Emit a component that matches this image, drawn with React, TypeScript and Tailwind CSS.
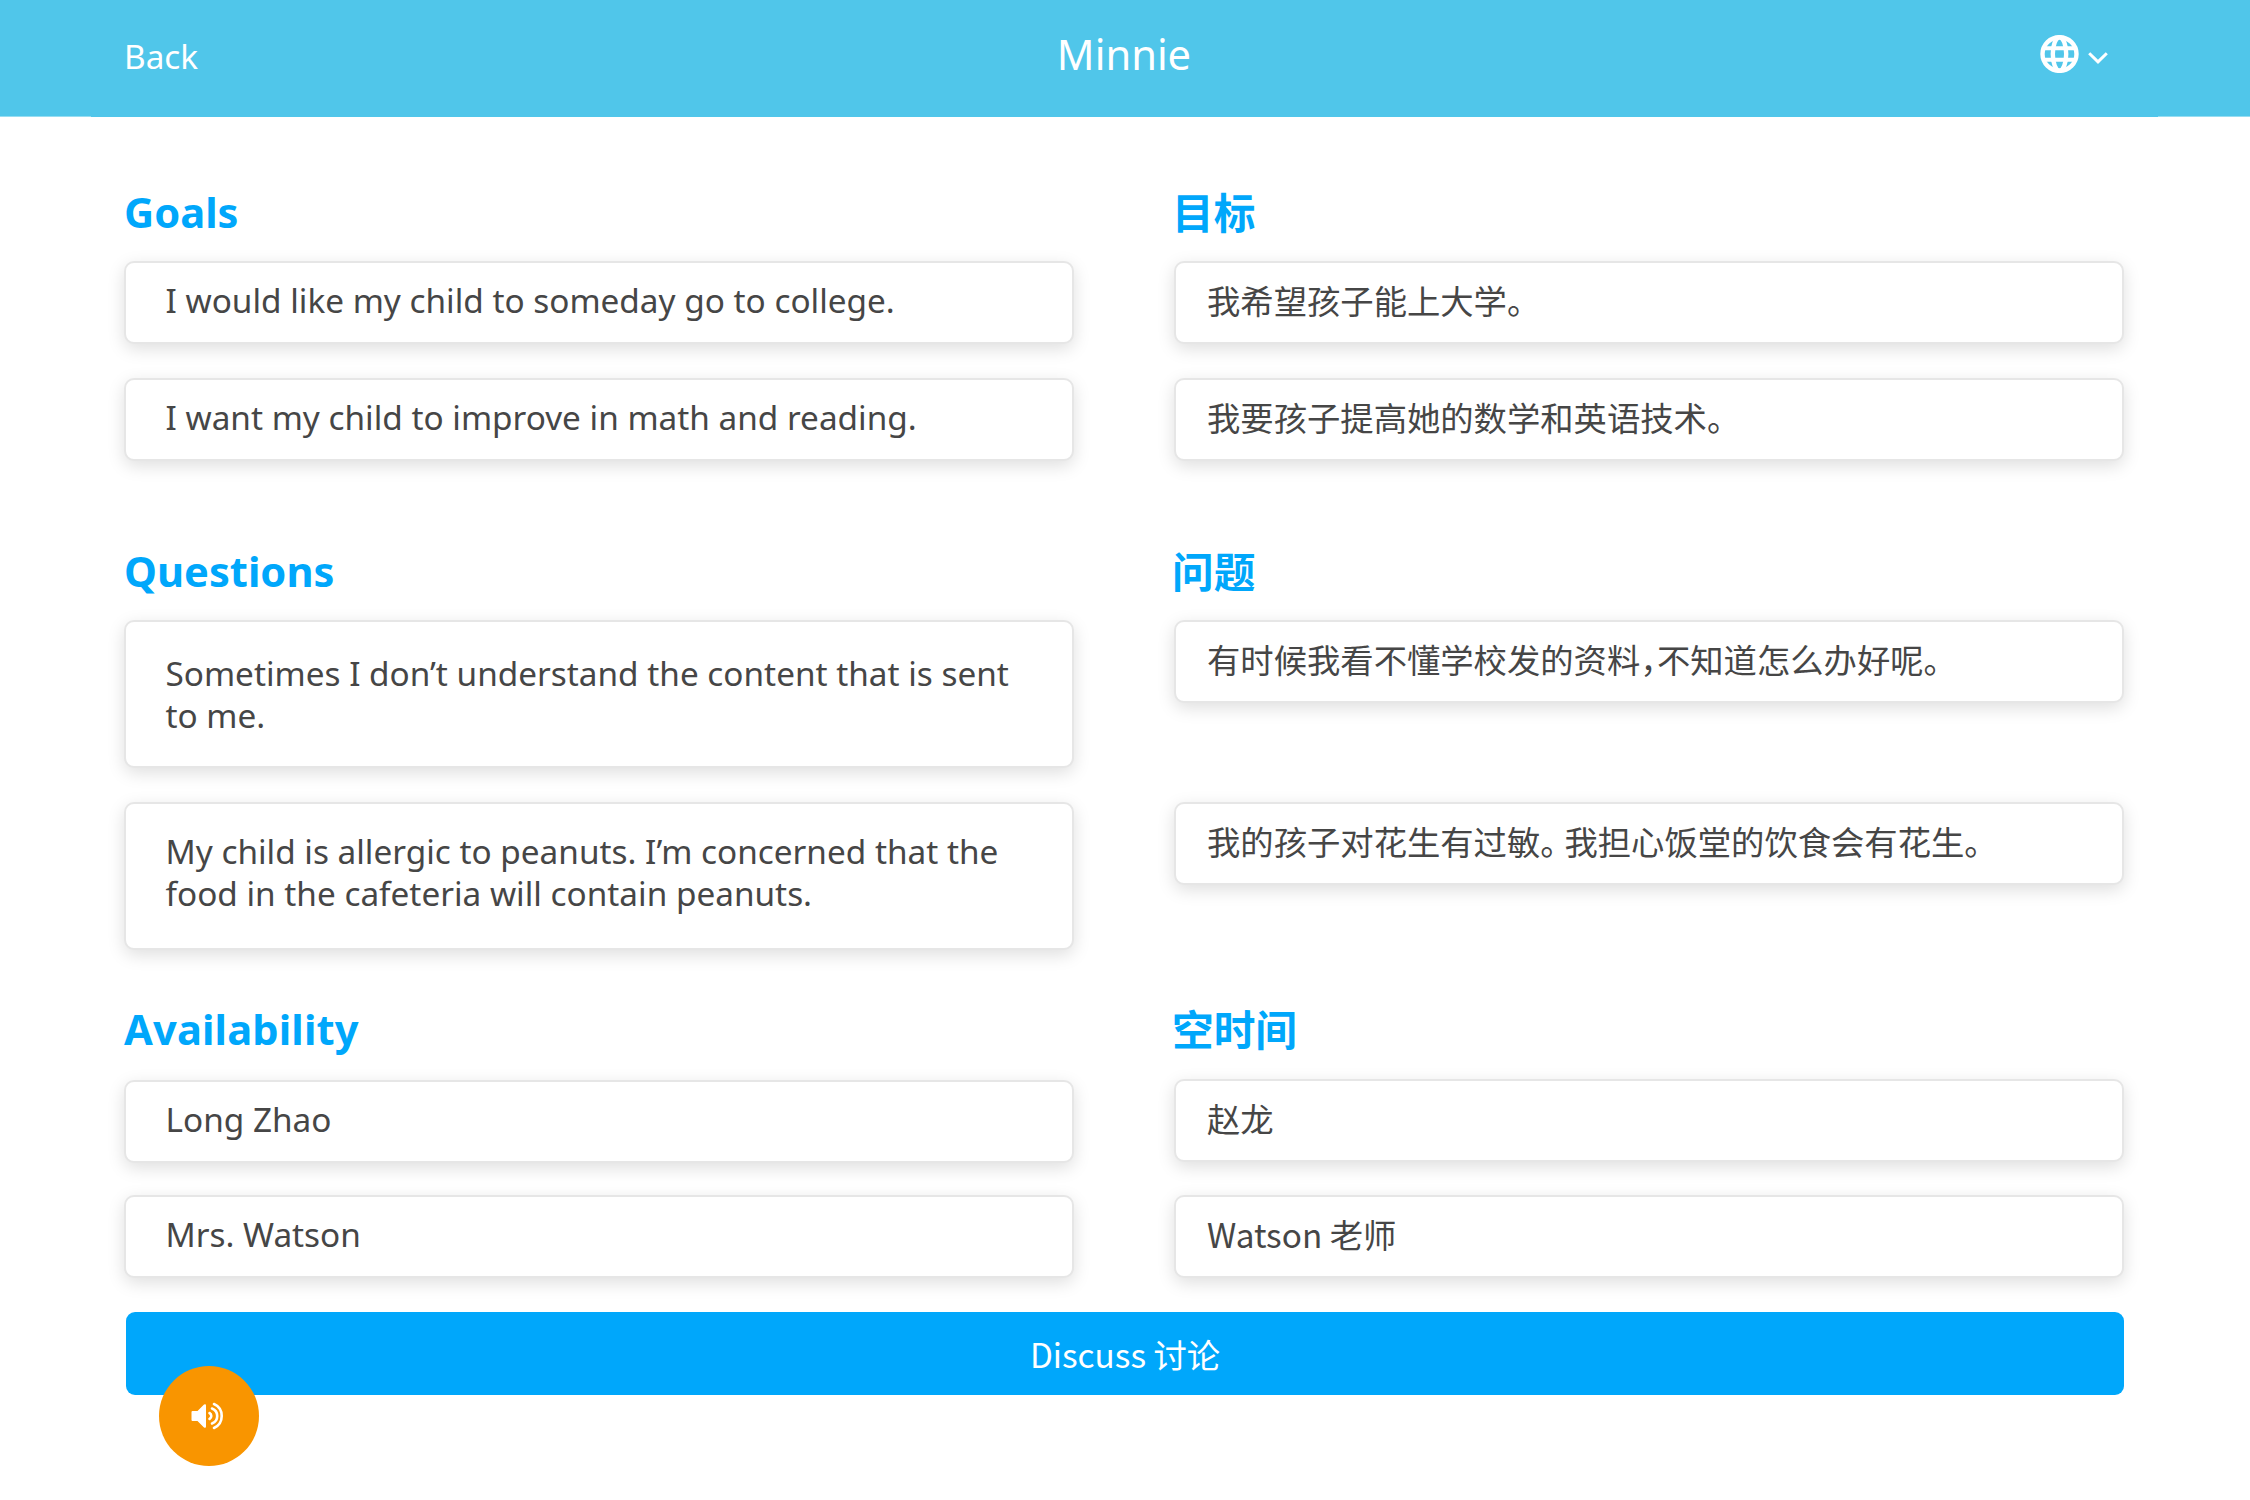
import React from "react";

type CardProps = { children: React.ReactNode; className: string };

function Card({ children, className }: CardProps) {
  return (
    <div
      className={`w-[950px] rounded-[10px] border-2 border-[#e6e6e6] bg-white text-[33.33px] leading-[42px] text-[#464646] shadow-[0_5px_17px_rgba(0,0,0,0.13)] ${className}`}
    >
      {children}
    </div>
  );
}

const single = "h-[83px] pl-[39.5px] pt-4";
const zh =
  "h-[83px] pl-[31px] pt-4 font-['Noto_Sans_CJK_SC',sans-serif] [font-feature-settings:'halt']";

function Heading({ en, cn, className = "" }: { en: string; cn: string; className?: string }) {
  return (
    <div className="grid h-[52px] grid-cols-[948px_950px] gap-x-[100px] text-[41.67px] font-bold text-[#00a7fb]">
      <h2 className={`leading-[52px] ${className}`}>{en}</h2>
      <h2 className="font-['Noto_Sans_CJK_SC',sans-serif] leading-[50px]">{cn}</h2>
    </div>
  );
}

function Pair({ children, className }: CardProps) {
  return (
    <div className={`grid grid-cols-[950px_950px] items-start gap-x-[100px] ${className}`}>
      {children}
    </div>
  );
}

export default function App() {
  return (
    <div className="h-[1500px] w-[2250px] overflow-hidden bg-white font-['Noto_Sans',sans-serif]">
      <header className="relative grid h-[117px] grid-cols-3 bg-[#50c6ea] px-[124px] text-white">
        <a className="pt-[35px] text-[33.33px] leading-[42px]">Back</a>
        <h1 className="pt-[28px] pr-[2px] text-center text-[41.67px] leading-[52px]">Minnie</h1>
        <div className="flex justify-end pt-[35px] pr-[18px]">
          <svg className="mr-[9px] h-[38px] w-[39px]" viewBox="0 0 39 38" fill="none" stroke="currentColor" strokeWidth="4.4">
            <ellipse cx="19.5" cy="19" rx="17" ry="16.8" />
            <ellipse cx="19.5" cy="19" rx="6.7" ry="16.8" />
            <path d="M3.5 13.2H35.5M3.5 24.8H35.5" strokeWidth="4" />
          </svg>
          <svg className="mt-[17px] h-3 w-5" viewBox="0 0 20 12" fill="none" stroke="currentColor" strokeWidth="3">
            <path d="M1.2 1.2L10 9.8L18.8 1.2" />
          </svg>
        </div>
        <span className="absolute bottom-0 left-0 h-px w-[91px] bg-white/40" />
        <span className="absolute right-0 bottom-0 h-px w-[92px] bg-white/40" />
      </header>

      <main className="px-[124px] pt-[69px]">
        <section className="h-[359px]">
          <Heading en="Goals" cn="目标" />
          <Pair className="mt-[23px]">
            <Card className={single}>I would like my child to someday go to college.</Card>
            <Card className={zh}>我希望孩子能上大学。</Card>
          </Pair>
          <Pair className="mt-[34px]">
            <Card className={single}>I want my child to improve in math and reading.</Card>
            <Card className={zh}>我要孩子提高她的数学和英语技术。</Card>
          </Pair>
        </section>

        <section className="h-[458px]">
          <Heading en="Questions" cn="问题" />
          <Pair className="mt-[23px]">
            <Card className="h-[148px] pt-[30px] pr-10 pl-[39.5px]">
              Sometimes I don’t understand the content that is sent to me.
            </Card>
            <Card className={zh}>有时候我看不懂学校发的资料，不知道怎么办好呢。</Card>
          </Pair>
          <Pair className="mt-[34px]">
            <Card className="h-[148px] pt-[26px] pr-10 pl-[39.5px]">
              My child is allergic to peanuts. I’m concerned that the food in the cafeteria will contain peanuts.
            </Card>
            <Card className={zh}>我的孩子对花生有过敏。 我担心饭堂的饮食会有花生。</Card>
          </Pair>
        </section>

        <section>
          <Heading en="Availability" cn="空时间" className="tracking-[0.15px]" />
          <Pair className="mt-[24px]">
            <Card className={`mt-px ${single}`}>Long Zhao</Card>
            <Card className={zh}>赵龙</Card>
          </Pair>
          <Pair className="mt-[32px]">
            <Card className={single}>Mrs. Watson</Card>
            <Card className={zh}>Watson 老师</Card>
          </Pair>
        </section>

        <div className="relative mt-[34px] ml-[2px] h-[83px] w-[1998px]">
          <button className="block h-full w-full rounded-[9px] bg-[#00a7fb] font-['Noto_Sans_CJK_SC',sans-serif] text-[33.33px] leading-[42px] text-white">
            Discuss 讨论
          </button>
          <button className="absolute top-[54px] left-[33.3px] flex h-[100px] w-[100px] items-center justify-center rounded-full bg-[#f99500] text-white">
            <svg className="mr-[4px] h-[28px] w-[33px]" viewBox="0 0 33 28" fill="none" stroke="currentColor" strokeWidth="2.6" strokeLinecap="round">
              <path d="M1.5 9H6.5L13 2.5Q15 1.5 15 3.5V24.5Q15 26.5 13 25.5L6.5 19H1.5Q.5 19 .5 18V10Q.5 9 1.5 9Z" fill="currentColor" stroke="none" />
              <path d="M18.5 11A3.4 3.4 0 0 1 18.5 17M21 6.5A8 8 0 0 1 21 21.5M23 2A13.2 13.2 0 0 1 23 26" />
            </svg>
          </button>
        </div>
      </main>
    </div>
  );
}
